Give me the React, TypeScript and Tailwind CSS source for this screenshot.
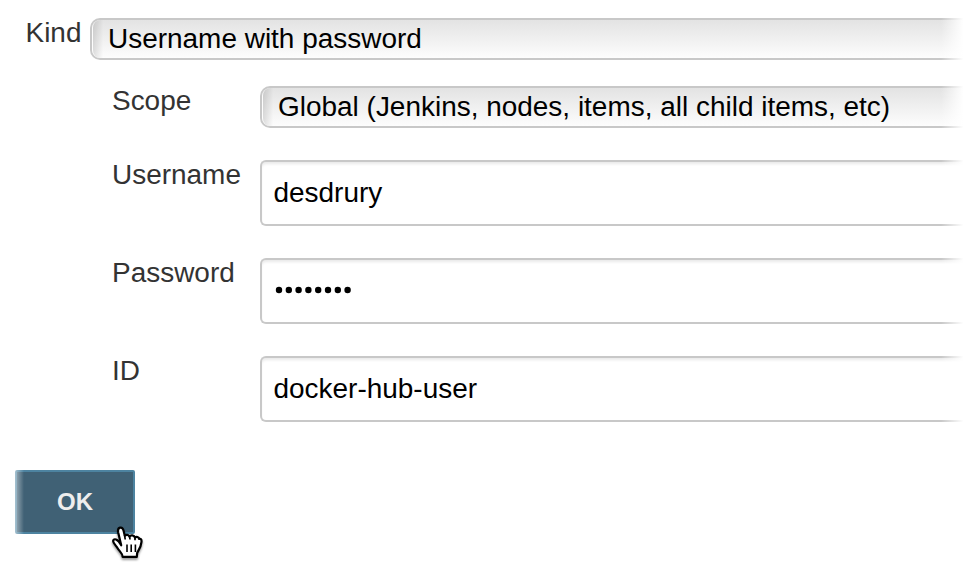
import React from "react";

function Label({ children }: { children: React.ReactNode }) {
  return <div className="w-[148px] shrink-0 text-[#333333]">{children}</div>;
}

function Select({ value }: { value: string }) {
  return (
    <div className="relative h-[42px] min-w-0 flex-1 overflow-hidden rounded-l-[10px] border-y-2 border-l-2 border-[#c8c8c8] bg-linear-to-b from-[#e3e3e3] to-[#fdfdfd] pl-4 leading-[37px] text-black">
      <div className="absolute inset-y-0 left-0 w-[11px] rounded-l-[8px] border-l border-white/80 bg-linear-to-r from-black/12 to-transparent" />
      <span className="relative">{value}</span>
    </div>
  );
}

function Field({ label, children }: { label: string; children: React.ReactNode }) {
  return (
    <div className="flex h-[66px]">
      <Label>{label}</Label>
      <div className="flex min-w-0 flex-1 items-center rounded-l-[6px] border-y-2 border-l-2 border-[#c8c8c8] bg-white pb-px pl-[11.5px] text-black shadow-[inset_0_3px_3px_-1px_rgba(0,0,0,0.09)]">
        {children}
      </div>
    </div>
  );
}

function HandCursor() {
  return (
    <svg
      className="absolute top-[53px] left-[95px] h-[40px] w-[36px] drop-shadow-[0_2px_1px_rgba(0,0,0,0.4)]"
      viewBox="0 0 36 40"
    >
      <path
        d="M11.2 22.3 L8.2 9.4 C7.2 3.6 12.4 3 13.5 7.6 L14.8 12.8 C15.8 11.4 18.8 11.6 19.4 13.6 C20.6 11.8 24.2 12 25 14.6 C26.4 13.2 28.8 14 29.2 16 C30.8 15.2 31.9 16.8 31.4 19.4 C31 24 28.9 26.5 27.2 29.8 L26.8 33.8 H12.6 C12.6 30.2 9.5 28.4 7.6 25.2 C6.3 22.9 3 20 3.1 17.9 C3.8 15 7.6 15.6 11.2 22.3 Z"
        fill="white"
        stroke="black"
        strokeWidth="2.2"
        strokeLinejoin="round"
      />
      <path d="M17 21.5V29M21.2 21.5V29M25.4 21.5V29" fill="none" stroke="black" strokeWidth="1.6" />
      <path d="M14.6 12.2L15.2 16.5M19.6 13.2L20 16.5M25 14.4V17.2" fill="none" stroke="black" strokeWidth="1.7" />
    </svg>
  );
}

export default function App() {
  return (
    <main className="relative h-[584px] w-[966px] overflow-hidden bg-white pt-[18px] font-['Liberation_Sans',Arial,sans-serif] text-[27.96px] leading-[29px]">
      <div className="flex pl-[25.5px]">
        <div className="w-[64.5px] shrink-0 text-[#333333]">Kind</div>
        <Select value="Username with password" />
      </div>
      <div className="mt-[26px] pl-[112px]">
        <div className="flex">
          <Label>Scope</Label>
          <Select value="Global (Jenkins, nodes, items, all child items, etc)" />
        </div>
        <div className="mt-8 flex flex-col gap-8">
          <Field label="Username">desdrury</Field>
          <Field label="Password">
            <svg className="mb-px h-2 w-20" viewBox="0 0 80 8" aria-label="Password">
              {Array.from({ length: 8 }, (_, i) => (
                <circle key={i} cx={5 + i * 9.8} cy="4" r="3.2" fill="black" />
              ))}
            </svg>
          </Field>
          <Field label="ID">docker-hub-user</Field>
        </div>
      </div>
      <div className="relative mt-12 ml-[15px] w-[120px]">
        <button className="block h-16 w-[120px] rounded-[2px] border-2 border-[#4d83a0] bg-[#406175] pb-[2px] text-[24px] font-bold text-[#eeeeee]">
          OK
        </button>
        <span className="absolute inset-y-0 left-0 w-[9px] bg-linear-to-r from-white/50 to-transparent" />
        <HandCursor />
      </div>
      <div className="pointer-events-none absolute inset-y-0 right-0 w-[25px] bg-linear-to-r from-white/0 to-white to-90%" />
    </main>
  );
}
